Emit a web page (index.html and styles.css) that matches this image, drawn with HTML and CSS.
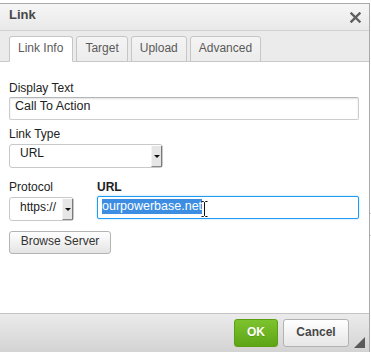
FILE: index.html
```html
<!DOCTYPE html>
<html>
<head>
<meta charset="utf-8">
<title>Link</title>
<link rel="stylesheet" href="styles.css">
</head>
<body>
<div class="page">
  <div class="dialog">
    <div class="title">
      <span class="title-text">Link</span>
      <svg class="close" width="11" height="11" viewBox="0 0 11 11"><path d="M1.5 1.5 L9.5 9.5 M9.5 1.5 L1.5 9.5" stroke="#5e5e5e" stroke-width="2.4" stroke-linecap="square" fill="none"/></svg>
    </div>
    <div class="tabs">
      <div class="tab active">Link Info</div>
      <div class="tab">Target</div>
      <div class="tab">Upload</div>
      <div class="tab">Advanced</div>
    </div>
    <div class="contents">
      <div class="label l-display">Display Text</div>
      <div class="input input-display">Call To Action</div>
      <div class="label l-type">Link Type</div>
      <div class="select select-type"><span class="sel-text">URL</span><span class="sel-arrow"><span class="tri"></span></span></div>
      <div class="row">
        <div class="col col-proto">
          <div class="label">Protocol</div>
          <div class="select select-proto"><span class="sel-text">https://</span><span class="sel-arrow"><span class="tri"></span></span></div>
        </div>
        <div class="col col-url">
          <div class="label bold">URL</div>
          <div class="input input-url"><span class="hl">ourpowerbase.net</span><svg class="ibeam" width="7" height="16" viewBox="0 0 7 16"><path d="M0.5 0.5 H2.5 L3.5 1.5 L4.5 0.5 H6.5 M3.5 1.5 V14.5 M0.5 15.5 H2.5 L3.5 14.5 L4.5 15.5 H6.5" stroke="#111" stroke-width="1" fill="none"/></svg></div>
        </div>
      </div>
      <div class="btn browse">Browse Server</div>
    </div>
    <div class="footer">
      <div class="btn ok">OK</div>
      <div class="btn cancel">Cancel</div>
      <svg class="grip" width="11" height="11" viewBox="0 0 11 11"><path d="M11 0 L11 11 L0 11 Z" fill="#5a5a5a"/></svg>
    </div>
  </div>
  <div class="edge"><span class="tick t1"></span><span class="tick t2"></span></div>
</div>
</body>
</html>
```

FILE: styles.css
```css
* { box-sizing: border-box; }
html, body {
  margin: 0;
  padding: 0;
  background: #fff;
  overflow: hidden;
  height: 352px;
}
body {
  font-family: "Liberation Sans", Arial, sans-serif;
  font-size: 12px;
  color: #222;
}
.page {
  display: flex;
  align-items: flex-start;
}
.dialog {
  margin-left: -1px;
  margin-top: 3px;
  width: 371px;
  height: 350px;
  flex: none;
  border: 1px solid #a9a9a9;
  display: flex;
  flex-direction: column;
  background: #fff;
}
.title {
  height: 27px;
  flex: none;
  border-bottom: 1px solid #d3d3d3;
  background: linear-gradient(#f6f6f6, #e9e9e9);
  display: flex;
  justify-content: space-between;
  align-items: flex-start;
  padding: 3px 8px 0 9px;
}
.title-text {
  font-size: 13px;
  font-weight: bold;
  line-height: 16px;
  color: #474747;
}
.close {
  margin-top: 5px;
  display: block;
}
.tabs {
  height: 31px;
  flex: none;
  background: #ebebeb;
  border-bottom: 1px solid #c9c9c9;
  display: flex;
  align-items: flex-end;
  gap: 3px;
  padding-left: 9px;
}
.tab {
  height: 26px;
  margin-bottom: -1px;
  padding: 0 8px 2px;
  line-height: 22px;
  font-size: 12px;
  color: #5a5a5a;
  background: linear-gradient(#f4f4f4, #ececec);
  border: 1px solid #c6c6c6;
  border-radius: 3px 3px 0 0;
}
.tab.active {
  background: #fff;
  border-bottom-color: #fff;
  padding: 0 9px 2px 8px;
}
.contents {
  height: 251px;
  flex: none;
  padding: 19px 10px 0 9px;
  display: flex;
  flex-direction: column;
  align-items: flex-start;
}
.label {
  line-height: 15px;
  height: 15px;
  color: #222;
}
.label.bold { font-weight: bold; }
.l-type { margin-top: 7px; }
.input {
  width: 100%;
  height: 23px;
  border: 1px solid #cbcdcf;
  border-top-color: #b3b6b9;
  border-radius: 2px;
  box-shadow: inset 0 1px 2px rgba(0,0,0,0.12);
  padding: 1px 5px 0;
  font-size: 12.5px;
  line-height: 14px;
  color: #222;
  background: #fff;
}
.input-display { margin-top: 1px; }
.select {
  height: 24px;
  border: 1px solid #c9c9c9;
  border-radius: 3px;
  background: #fff;
  display: flex;
  align-items: stretch;
  color: #1a1a1a;
}
.select-type { width: 154px; margin-top: 2px; }
.sel-text {
  flex: 1;
  padding: 1px 0 0 10px;
  line-height: 14px;
}
.select-proto .sel-text { padding-top: 2px; }
.sel-arrow {
  width: 11px;
  margin: 1px 0 0 0;
  background: #e6e6e6;
  border-left: 1px solid #f4f4f4;
  border-right: 1px solid #7a7a7a;
  border-bottom: 1px solid #8a8a8a;
  display: flex;
  align-items: center;
  justify-content: center;
}
.tri {
  width: 0;
  height: 0;
  border-left: 3px solid transparent;
  border-right: 3px solid transparent;
  border-top: 3px solid #111;
}
.row {
  margin-top: 12px;
  display: flex;
  width: 100%;
  align-items: flex-start;
}
.col-proto { width: 65px; margin-right: 23px; flex: none; }
.col-url { flex: 1; }
.select-proto { width: 65px; margin-top: 2px; }
.input-url {
  margin-top: 1px;
  border: 1px solid #1f9cf0;
  box-shadow: 0 0 2px rgba(31,156,240,0.45);
  padding: 2px 4px 0;
  display: flex;
  align-items: flex-start;
}
.hl {
  background: #3d8ee2;
  color: #fff;
  line-height: 15px;
}
.ibeam {
  display: block;
  margin: 2px 0 0 -1px;
}
.btn {
  border-radius: 3px;
  text-align: center;
  white-space: nowrap;
}
.browse {
  margin-top: 10px;
  width: 102px;
  height: 23px;
  line-height: 19px;
  border: 1px solid #b4b4b4;
  background: linear-gradient(#ffffff, #e4e4e4);
  color: #333;
  font-size: 12px;
}
.footer {
  flex: 1;
  position: relative;
  border-top: 1px solid #c4c4c4;
  background: linear-gradient(#ebebeb, #d3d3d3);
  display: flex;
  justify-content: flex-end;
  align-items: flex-start;
  gap: 5px;
  padding: 5px 20px 0 0;
}
.ok, .cancel {
  height: 28px;
  line-height: 24px;
  font-weight: bold;
  font-size: 12px;
}
.ok {
  width: 44px;
  color: #fff;
  border: 1px solid #5c9f12;
  background: linear-gradient(#7dc32e, #5ea516);
  text-shadow: 0 1px 0 rgba(0,0,0,0.15);
}
.cancel {
  width: 66px;
  color: #474747;
  border: 1px solid #b2b2b2;
  background: linear-gradient(#ffffff, #e6e6e6);
}
.grip {
  position: absolute;
  right: 4px;
  bottom: 4px;
}
.edge {
  width: 2px;
  flex: none;
  display: flex;
  flex-direction: column;
  padding-top: 213px;
}
.tick {
  height: 1px;
  background: #c8c8c8;
}
.t2 { margin-top: 21px; }
```
